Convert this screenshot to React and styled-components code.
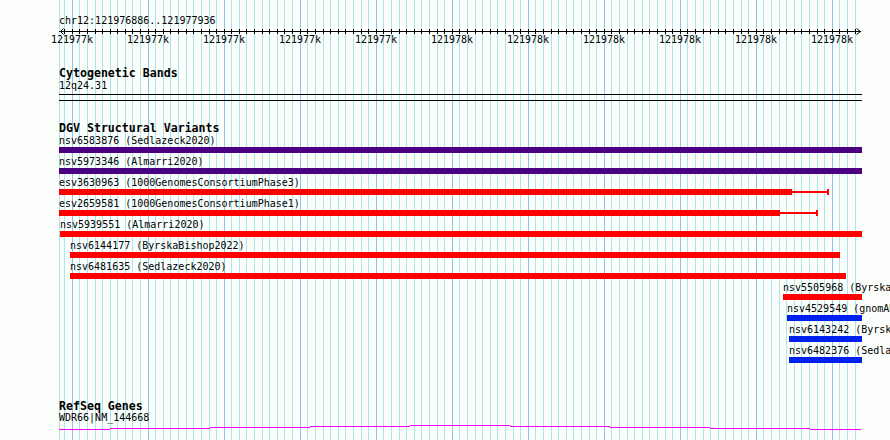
import React from 'react';
import styled, { createGlobalStyle } from 'styled-components';

// track canvas geometry (pixels, relative to the track's left edge at x=59)
const TRACK_WIDTH = 803;
const PAGE_HEIGHT = 440;
const MINOR_STEP = 7.6;
const FIRST_TICK = 5.1;
const ORIGIN = 59;

const PURPLE = '#4b0082';
const RED = '#ff0000';
const BLUE = '#0020f0';

const GlobalStyle = createGlobalStyle`
  html, body {
    margin: 0;
    padding: 0;
    background: #fcfefc;
    overflow: hidden;
  }
`;

const Page = styled.div`
  width: 890px;
  height: 440px;
  overflow: hidden;
  box-sizing: border-box;
  padding-left: ${ORIGIN}px;
  font-family: 'DejaVu Sans Mono', 'Liberation Mono', monospace;
  font-size: 10px;
  color: #000;
`;

const Main = styled.div`
  position: relative;
  z-index: 0;
  width: ${TRACK_WIDTH}px;
  height: ${PAGE_HEIGHT}px;
  display: flex;
  flex-direction: column;
`;

const GridLayer = styled.svg`
  position: absolute;
  top: 0;
  left: 0;
  z-index: -1;
`;

const Locus = styled.div`
  margin-top: 15px;
  line-height: 11px;
  white-space: nowrap;
`;

const RulerSvg = styled.svg`
  display: block;
  margin-top: 1px;
  overflow: visible;
`;

const ScaleLabels = styled.div`
  display: flex;
  margin-top: -1px;
  margin-left: -25px;
  line-height: 11px;
`;

const ScaleLabel = styled.span`
  flex: 0 0 76px;
  text-align: center;
  white-space: nowrap;
`;

const TrackTitle = styled.div`
  margin-top: ${p => p.$gap}px;
  font-size: 11.6px;
  font-weight: bold;
  line-height: 13px;
  white-space: nowrap;
`;

const TrackLabel = styled.div`
  margin-top: ${p => p.$gap || 0}px;
  line-height: 11px;
  white-space: nowrap;
`;

const BandBox = styled.div`
  margin-top: 3px;
  height: 5px;
  border-top: 1px solid #000;
  border-bottom: 1px solid #000;
`;

const FeatureRow = styled.div`
  flex: none;
  height: 21px;
  box-sizing: border-box;
  padding-left: ${p => p.$offset}px;
`;

const FeatureLabel = styled.div`
  line-height: 11px;
  white-space: nowrap;
`;

const BarLine = styled.div`
  display: flex;
  align-items: flex-start;
  margin-top: 1px;
  height: 6px;
`;

const Bar = styled.div`
  flex: none;
  width: ${p => p.$w}px;
  height: 6px;
  background: ${p => p.$color};
`;

const Whisker = styled.div`
  flex: none;
  width: ${p => p.$w}px;
  height: 2px;
  margin-top: 2px;
  background: ${p => p.$color};
`;

const Cap = styled.div`
  flex: none;
  width: 2px;
  height: 6px;
  background: ${p => p.$color};
`;

const GeneSvg = styled.svg`
  display: block;
  margin-top: 1px;
`;

const tickXs = [];
for (let k = 0; FIRST_TICK + MINOR_STEP * k < TRACK_WIDTH; k++) {
  tickXs.push({ x: Math.round(FIRST_TICK + MINOR_STEP * k), major: k % 10 === 1 });
}

const scaleLabels = [
  '121977k', '121977k', '121977k', '121977k', '121977k',
  '121978k', '121978k', '121978k', '121978k', '121978k', '121978k',
];

const variants = [
  { name: 'nsv6583876 (Sedlazeck2020)', start: 59, end: 862, color: PURPLE },
  { name: 'nsv5973346 (Almarri2020)', start: 59, end: 862, color: PURPLE },
  { name: 'esv3630963 (1000GenomesConsortiumPhase3)', start: 59, end: 792, whisker: 827, color: RED },
  { name: 'esv2659581 (1000GenomesConsortiumPhase1)', start: 59, end: 780, whisker: 816, color: RED },
  { name: 'nsv5939551 (Almarri2020)', start: 60, end: 862, color: RED },
  { name: 'nsv6144177 (ByrskaBishop2022)', start: 70, end: 840, color: RED },
  { name: 'nsv6481635 (Sedlazeck2020)', start: 70, end: 846, color: RED },
  { name: 'nsv5505968 (ByrskaBishop2022)', start: 783, end: 862, color: RED },
  { name: 'nsv4529549 (gnomAD_v2.1)', start: 787, end: 862, color: BLUE },
  { name: 'nsv6143242 (ByrskaBishop2022)', start: 789, end: 862, color: BLUE },
  { name: 'nsv6482376 (Sedlazeck2020)', start: 789, end: 862, color: BLUE },
];

// WDR66 transcript: a faint arc of 1px steps
const geneSteps = [
  [59, 110, 429], [110, 210, 428], [210, 310, 427], [310, 410, 426], [410, 510, 425],
  [510, 610, 426], [610, 710, 427], [710, 810, 428], [810, 861, 429],
];

const Grid = () => (
  <GridLayer width={TRACK_WIDTH} height={PAGE_HEIGHT}>
    <rect x={0} y={0} width={1} height={PAGE_HEIGHT} fill="#a9e7ec" />
    {tickXs.map(t => (
      <rect key={t.x} x={t.x} y={0} width={1} height={PAGE_HEIGHT} fill={t.major ? '#86c6ea' : '#a9e7ec'} />
    ))}
  </GridLayer>
);

const Ruler = () => (
  <RulerSvg width={TRACK_WIDTH} height={8}>
    <rect x={0} y={4} width={TRACK_WIDTH - 1} height={1} fill="#000" />
    {tickXs.map(t => (
      <rect key={t.x} x={t.x} y={2} width={1} height={5} fill="#000" />
    ))}
    <polyline points="4.5,1.5 1.5,4.5 4.5,7.5" fill="none" stroke="#000" strokeWidth="1" />
    <polyline points="797.5,1.5 801.5,4.5 797.5,7.5" fill="none" stroke="#000" strokeWidth="1" />
  </RulerSvg>
);

const Variant = ({ v }) => (
  <FeatureRow $offset={v.start - ORIGIN}>
    <FeatureLabel>{v.name}</FeatureLabel>
    <BarLine>
      <Bar $w={v.end - v.start} $color={v.color} />
      {v.whisker && <Whisker $w={v.whisker - v.end} $color={v.color} />}
      {v.whisker && <Cap $color={v.color} />}
    </BarLine>
  </FeatureRow>
);

const Gene = () => (
  <GeneSvg width={TRACK_WIDTH} height={6}>
    {geneSteps.map(([a, b, y]) => (
      <rect key={a} x={a - ORIGIN} y={y - 424} width={b - a} height={1} fill="#ff00ff" />
    ))}
  </GeneSvg>
);

export default function App() {
  return (
    <>
      <GlobalStyle />
      <Page>
        <Main>
          <Grid />
          <Locus>chr12:121976886..121977936</Locus>
          <Ruler />
          <ScaleLabels>
            {scaleLabels.map((l, i) => <ScaleLabel key={i}>{l}</ScaleLabel>)}
          </ScaleLabels>

          <TrackTitle $gap={22}>Cytogenetic Bands</TrackTitle>
          <TrackLabel>12q24.31</TrackLabel>
          <BandBox />

          <TrackTitle $gap={21}>DGV Structural Variants</TrackTitle>
          {variants.map(v => <Variant key={v.name} v={v} />)}

          <TrackTitle $gap={34}>RefSeq Genes</TrackTitle>
          <TrackLabel $gap={-1}>WDR66|NM_144668</TrackLabel>
          <Gene />
        </Main>
      </Page>
    </>
  );
}
